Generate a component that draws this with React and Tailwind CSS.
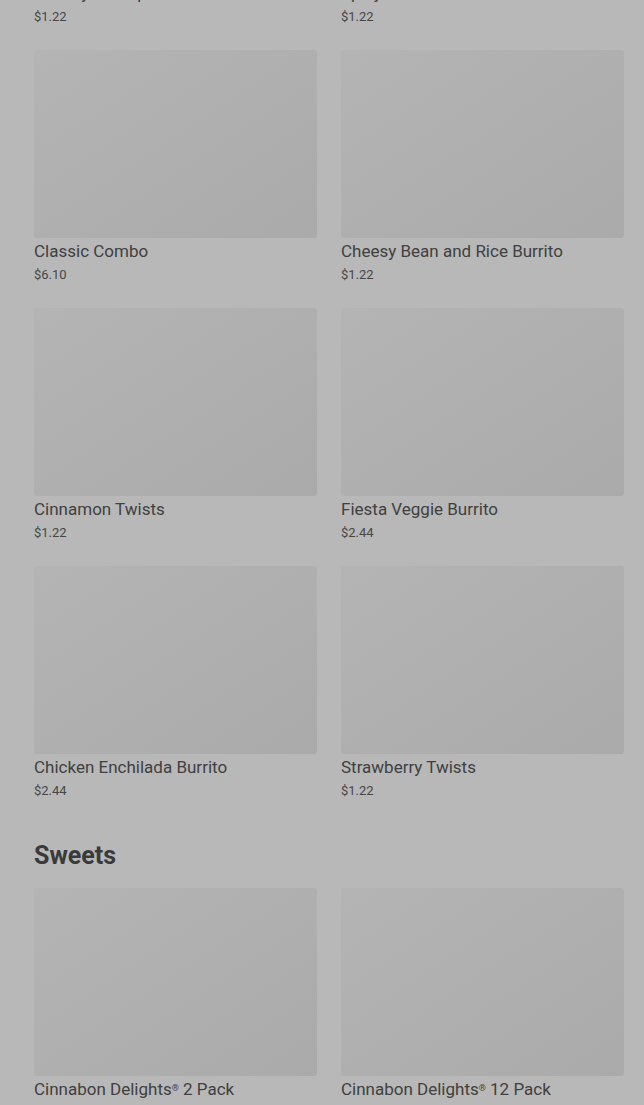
import React from 'react';

const value = [
  { name: 'Cheesy Roll Up', price: '$1.22' },
  { name: 'Spicy Potato Soft Taco', price: '$1.22' },
  { name: 'Classic Combo', price: '$6.10' },
  { name: 'Cheesy Bean and Rice Burrito', price: '$1.22' },
  { name: 'Cinnamon Twists', price: '$1.22' },
  { name: 'Fiesta Veggie Burrito', price: '$2.44' },
  { name: 'Chicken Enchilada Burrito', price: '$2.44' },
  { name: 'Strawberry Twists', price: '$1.22' },
];

const sweets = [
  { name: 'Cinnabon Delights', reg: true, size: '2 Pack', price: '$2.69' },
  { name: 'Cinnabon Delights', reg: true, size: '12 Pack', price: '$7.99' },
];

function Item({ item }) {
  return (
    <div className="flex flex-col">
      <div className="h-[188px] rounded-[3px] bg-gradient-to-br from-[#b4b4b4] to-[#aaaaaa]" />
      <p className="mt-[2px] text-[17px] leading-[22px] text-[#404040]">
        {item.name}
        {item.reg && <sup className="text-[9px] leading-none">®</sup>}
        {item.size && ` ${item.size}`}
      </p>
      <p className="mt-[3px] text-[13px] leading-[19px] text-[#474747]">{item.price}</p>
    </div>
  );
}

export default function App() {
  return (
    <div className="h-[1105px] overflow-hidden bg-[#b8b8b8] font-['Roboto','Liberation_Sans',sans-serif]">
      <div className="mt-[-208px] pl-[34px] pr-[20px]">
        <div className="grid grid-cols-2 gap-x-6 gap-y-6">
          {value.map((item) => (
            <Item key={item.name} item={item} />
          ))}
        </div>

        <h2 className="mt-[41px] mb-[17px] text-[25px] font-bold leading-[30px] text-[#3a3a3a]">Sweets</h2>
        <div className="grid grid-cols-2 gap-x-6 gap-y-6">
          {sweets.map((item) => (
            <Item key={item.size} item={item} />
          ))}
        </div>
      </div>
    </div>
  );
}
